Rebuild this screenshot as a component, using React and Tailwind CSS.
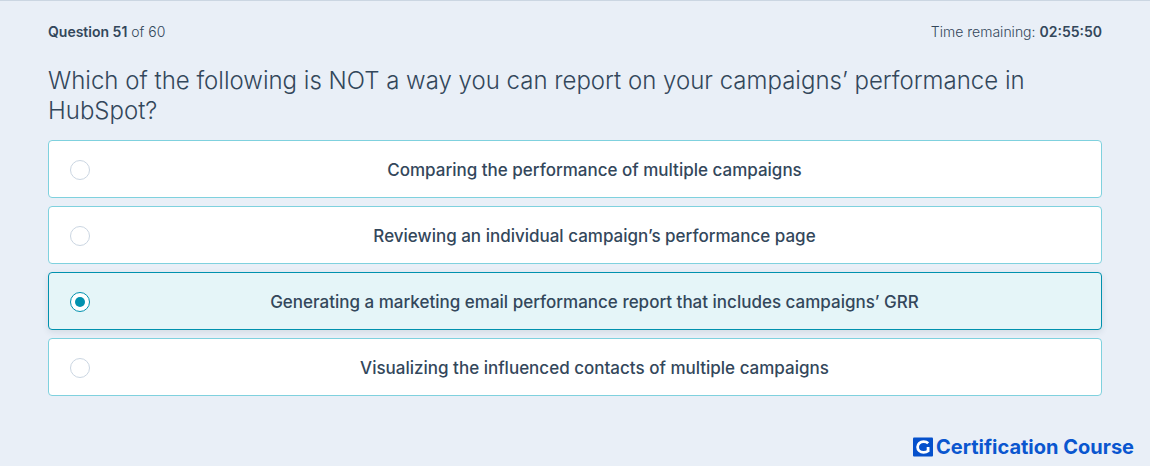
import { useState } from 'react';

const options = [
  'Comparing the performance of multiple campaigns',
  'Reviewing an individual campaign’s performance page',
  'Generating a marketing email performance report that includes campaigns’ GRR',
  'Visualizing the influenced contacts of multiple campaigns',
];

function Option({ label, checked, onSelect }) {
  return (
    <label
      className={
        'flex cursor-pointer items-start rounded-[4px] border pt-[19px] pr-0.5 pb-[17px] pl-[21px] ' +
        (checked
          ? 'border-[#0091ae] bg-[#e5f5f8] shadow-[0_2px_6px_rgba(45,62,80,0.12)]'
          : 'border-[#7fd1de] bg-white')
      }
    >
      <input
        type="radio"
        name="answer"
        checked={checked}
        onChange={onSelect}
        className="peer sr-only"
      />
      <span
        className={
          'flex size-5 shrink-0 items-center justify-center rounded-full border bg-white peer-focus-visible:ring-2 peer-focus-visible:ring-[#7fd1de] ' +
          (checked ? 'border-[#0091ae]' : 'border-[#cbd6e2]')
        }
      >
        {checked && <span className="size-2.5 rounded-full bg-[#0091ae]" />}
      </span>
      <span className="flex-1 text-center text-[17px] leading-5 font-medium">{label}</span>
    </label>
  );
}

export default function App() {
  const [selected, setSelected] = useState(2);

  return (
    <div className="flex min-h-screen flex-col border-t border-[#cbd6e2] bg-[#e9eff7] font-['Inter',sans-serif] text-[#33475b]">
      <main className="px-12 pt-5">
        <header className="flex items-center justify-between text-sm leading-[22px] font-light">
          <p>
            <strong className="font-semibold">Question 51</strong> of 60
          </p>
          <p>
            Time remaining: <strong className="font-semibold">02:55:50</strong>
          </p>
        </header>
        <fieldset className="pt-[23px]">
          <legend className="float-left mb-3.5 w-full text-2xl leading-[30px] font-light">
            Which of the following is NOT a way you can report on your campaigns’ performance in
            HubSpot?
          </legend>
          <div className="clear-both flex flex-col gap-2">
            {options.map((label, i) => (
              <Option
                key={label}
                label={label}
                checked={selected === i}
                onSelect={() => setSelected(i)}
              />
            ))}
          </div>
        </fieldset>
      </main>
      <footer className="mt-auto flex items-center justify-end gap-[3px] pr-4 pb-[5px] text-[#0a56cf]">
        <svg viewBox="0 0 20 20" className="size-5" aria-hidden="true">
          <rect width="20" height="19" y="0.5" rx="1" fill="#0550cc" />
          <path
            d="M15.2 6.3C14 5.1 12.5 4.6 10.6 4.6C7 4.6 4.6 7 4.6 10S7 15.4 10.6 15.4C12.4 15.4 13.9 15 15.1 14V10"
            fill="none"
            stroke="#fff"
            strokeWidth="2.8"
          />
        </svg>
        <span className="text-xl leading-7 font-bold">Certification Course</span>
      </footer>
    </div>
  );
}
